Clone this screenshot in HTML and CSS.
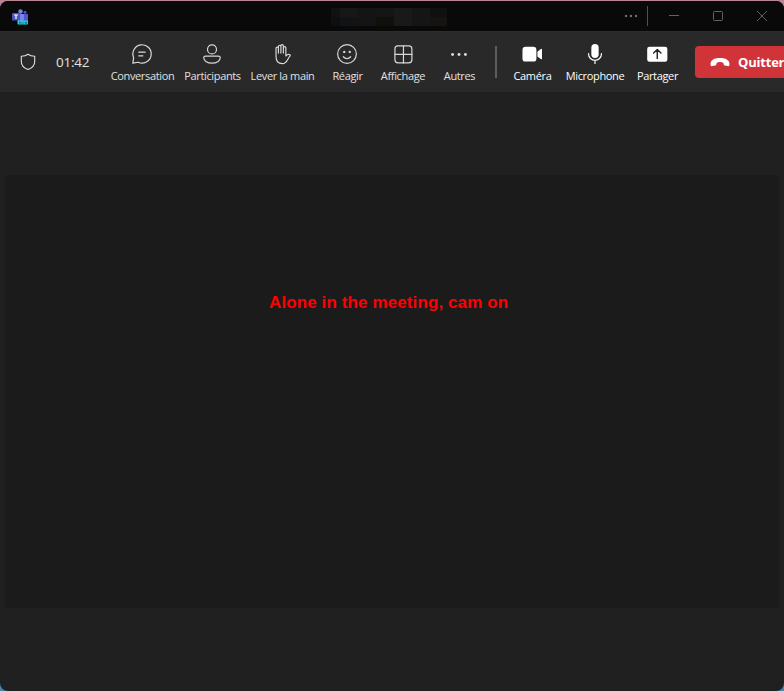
FILE: index.html
```html
<!DOCTYPE html>
<html lang="fr">
<head>
<meta charset="utf-8">
<title>Réunion</title>
<link rel="stylesheet" href="styles.css">
</head>
<body>
<div class="window">
  <header class="titlebar">
    <svg class="logo" width="18" height="17" viewBox="0 0 18 17">
      <circle cx="8.500" cy="2.500" r="2.200" fill="#7b83eb"/><circle cx="13" cy="3.200" r="1.500" fill="#5059c9"/>
      <path d="M6 5h6v8H6z" fill="#7b83eb"/><path d="M12 5h4v7H12z" fill="#5059c9"/>
      <rect x="0" y="4" width="8" height="7.500" rx="1" fill="#4b53bc"/>
      <path d="M2 6h4M4 6v4" stroke="#fff" stroke-width="1.200"/>
      <rect x="5.500" y="11.500" width="10.500" height="4" rx=".8" fill="#20d5d8"/>
      <path d="M7.500 14.700v-2l1.500 2v-2M10.500 12.900h1.200M10.500 14.400h1.200M13 12.700l.4 2 .5-1.500.5 1.500.4-2" fill="none" stroke="#155c68" stroke-width=".7"/>
    </svg>
    <div class="redacted">
      <i class="b1"></i><i class="b2"></i><i class="b3"></i><i class="b4"></i><i class="b5"></i><i class="b6"></i><i class="b7"></i>
      <i class="b8"></i><i class="b9"></i><i class="b10"></i><i class="b11"></i><i class="b5"></i><i class="b6"></i><i class="b12"></i>
    </div>
    <svg class="controls" width="160" height="30" viewBox="0 0 160 30" fill="none" stroke="#626262">
      <g fill="#707070" stroke="none"><circle cx="2" cy="15" r="1.200"/><circle cx="7" cy="15" r="1.200"/><circle cx="12" cy="15" r="1.200"/></g>
      <path d="M23.500 5v20" stroke="#505050"/><path d="M45 14.500h10"/>
      <rect x="89.500" y="10.500" width="9" height="9" rx="1"/>
      <path d="M133 10l10 10M143 10l-10 10"/>
    </svg>
  </header>
  <nav class="toolbar">
    <svg class="shield" width="16" height="18" viewBox="0 0 16 18" fill="none" stroke="#e0e0e0" stroke-width="1.1"><path d="M8 1.200C6.200 2.600 3.800 3.200 1.300 3.300V8.500c0 4 2.500 6.500 6.700 8 4.200-1.500 6.700-4 6.700-8V3.300C12.200 3.200 9.800 2.600 8 1.200z" stroke-linejoin="round"/></svg>
    <span class="time">01:42</span>
    <button class="item conv"><svg viewBox="0 0 24 24"><path d="M2.900 16A10 10 0 1 1 7.800 21L2 22z"/><path d="M8.500 10h7M8.500 14h4.500"/></svg><span>Conversation</span></button>
    <button class="item part"><svg viewBox="0 0 24 24"><circle cx="12" cy="7" r="4.900"/><path d="M5 14.400h14q2 0 2 1.800c0 3.300-4 5.800-9 5.800s-9-2.500-9-5.800q0-1.800 2-1.800z"/></svg><span>Participants</span></button>
    <button class="item hand"><svg viewBox="0 0 24 24"><path d="M7 12V5.800a1.300 1.300 0 0 1 2.600 0V11V3.800a1.300 1.300 0 0 1 2.700 0V11V3.200a1.300 1.300 0 0 1 2.700 0V11V5.200a1.300 1.300 0 0 1 2.700 0V14.200c1.400-1.800 2.800-2.300 4.400-1.300.7.400.6 1 .1 1.400-2.700 2.200-3 8.200-8.200 8.200-4.900 0-7-3-7-7.400z" transform="translate(-1.500 0)"/></svg><span>Lever la main</span></button>
    <button class="item react"><svg viewBox="0 0 24 24"><circle cx="12" cy="12" r="10.200"/><path d="M8 15c2.200 2.700 5.800 2.700 8 0"/><g class="dots"><circle cx="9" cy="9.700" r="1.300"/><circle cx="15" cy="9.700" r="1.300"/></g></svg><span>Réagir</span></button>
    <button class="item view"><svg viewBox="0 0 24 24"><rect x="3.200" y="3.200" width="18.500" height="18.500" rx="3.300"/><path d="M12.500 3.200V21.700M3.200 12.500H21.700"/></svg><span>Affichage</span></button>
    <button class="item more"><svg viewBox="0 0 24 24"><g class="dots"><circle cx="5" cy="12.500" r="1.600"/><circle cx="12" cy="12.500" r="1.600"/><circle cx="19" cy="12.500" r="1.600"/></g></svg><span>Autres</span></button>
    <div class="divider"></div>
    <button class="item strong cam"><svg viewBox="0 0 24 24"><g class="solid"><rect x="1.600" y="4" width="15.200" height="16.300" rx="3.500"/><path d="M17.900 9.500L21.600 6.500q1.300-.8 1.300.8v9.600q0 1.400-1.300.6l-3.700-2.700z"/></g></svg><span>Caméra</span></button>
    <button class="item strong mic"><svg viewBox="0 0 24 24"><rect class="solid" x="8" y="1.200" width="8" height="15.100" rx="4"/><path d="M5 11.500v.8a7 6.500 0 0 0 14 0v-.8M12 18.800v3.500"/></svg><span>Microphone</span></button>
    <button class="item strong share"><svg viewBox="0 0 24 24"><rect class="solid" x="1.300" y="4" width="22" height="16.400" rx="2.500"/><path class="cut" d="M12.300 17V7.500M8.300 11l4-4 4 4"/></svg><span>Partager</span></button>
    <button class="leave"><svg width="20" height="10" viewBox="0 0 20 10"><path d="M10 1C5.500 1 1.600 2.500.8 5.200.4 6.600.5 8 .8 8.600c.3.600 1 .6 1.500.5l3-.7c.7-.2 1-.6 1.100-1.200l.3-1.500c2-.8 4.600-.8 6.600 0l.3 1.500c.1.600.4 1 1.100 1.200l3 .7c.5.100 1.200.1 1.500-.5.300-.6.400-2 0-3.400C18.400 2.500 14.500 1 10 1z" fill="#fff"/></svg><span>Quitter</span></button>
  </nav>
  <main class="stage"><section class="tile"><span>Alone in the meeting, cam on</span></section></main>
</div>
</body>
</html>
```
FILE: styles.css
```css
* { box-sizing: border-box; }
html, body { margin: 0; height: 691px; overflow: hidden; }
body { background: linear-gradient(#b98494 0 50%, #4585ad 50%); font-family: "Open Sans", "Noto Sans", sans-serif; }
.window { margin-top: 1px; height: 690px; overflow: hidden; border-radius: 8px; background: #202020; display: flex; flex-direction: column; }
.titlebar { height: 30px; flex: none; background: #090909; display: flex; align-items: flex-start; }
.logo { margin: 8px 0 0 12px; flex: none; }
.redacted { margin: 7px 0 0 301px; width: 116px; height: 18px; display: grid; grid-template-columns: 9px 18px 18px 18px 18px 18px 17px; grid-template-rows: 9px 9px; flex: none; }
.b1 { background: #101113; }
.b2 { background: #171717; }
.b3 { background: #121416; }
.b4 { background: #171513; }
.b5 { background: #191919; }
.b6 { background: #141616; }
.b7 { background: #101010; }
.b8 { background: #0d100f; }
.b9 { background: #111417; }
.b10 { background: #141415; }
.b11 { background: #0f0f0c; }
.b12 { background: #161311; }
.controls { margin-left: auto; flex: none; }
.toolbar { height: 61px; flex: none; background: #292929; border-top: 1px solid #2d2d2d; display: flex; align-items: flex-start; overflow: hidden; }
.shield { margin: 21px 0 0 20px; flex: none; }
.time { width: 51px; margin: 20px 0 0 20px; font-size: 13.5px; line-height: 20px; letter-spacing: -.25px; color: #e2e2e2; flex: none; }
.item { padding: 11px 0 0; margin: 0; border: 0; background: none; font: 11px/16px "Open Sans", sans-serif; color: #e0e0e0; display: flex; flex-direction: column; align-items: center; flex: none; }
.item svg { width: 22px; height: 22px; fill: none; stroke: #d8d8d8; stroke-width: 1.3; stroke-linecap: round; stroke-linejoin: round; }
.item span { margin-top: 3px; white-space: nowrap; letter-spacing: -.35px; }
.item .dots { fill: #d8d8d8; stroke: none; }
.strong { color: #fff; }
.strong svg { stroke: #fff; }
.strong span { padding-left: 1px; }
.item .solid { fill: #fff; stroke: none; }
.item .cut { stroke: #292929; stroke-width: 1.6; }
.conv, .hand, .mic { width: 71px; }
.part { width: 69px; }
.react { width: 59px; }
.view { width: 52px; }
.more { width: 61px; }
.conv svg, .part svg, .hand svg, .react svg, .more svg { margin-right: 1px; }
.cam, .share { width: 54px; }
.divider { width: 2px; height: 32px; margin: 14px 8px 0 5px; background: #5c5c5c; flex: none; }
.leave { margin: 14px 0 0 11px; width: 106px; height: 32px; padding: 0 0 0 15px; border: 0; border-radius: 4px; background: #d13438; color: #fff; font: 700 13px/20px "Open Sans", sans-serif; display: flex; align-items: center; gap: 8px; flex: none; }
.leave span { letter-spacing: -.2px; }
.stage { flex: 1; padding: 83px 5px; }
.tile { height: 433px; background: #1b1b1b; border-radius: 3px; padding: 118px 0 0 264px; }
.tile span { display: block; font: 700 17px/20px "Liberation Sans", sans-serif; color: #f00; white-space: nowrap; letter-spacing: .11px; }
```
